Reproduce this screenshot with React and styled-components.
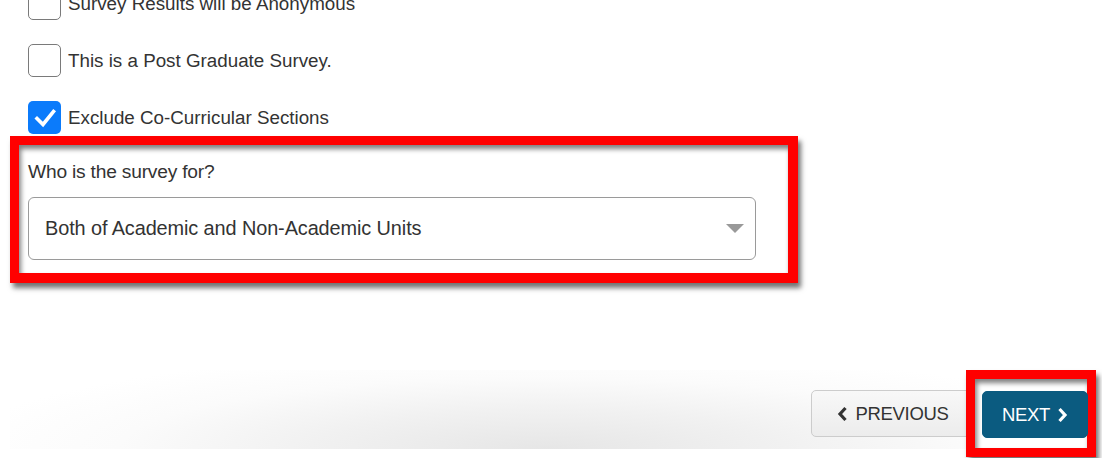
import React from 'react';
import styled, { createGlobalStyle } from 'styled-components';

const GlobalStyle = createGlobalStyle`
    html, body {
        margin: 0;
        padding: 0;
        background: #ffffff;
        overflow: hidden;
    }
    body {
        font-family: 'Liberation Sans', Arial, Helvetica, sans-serif;
        color: #333333;
    }
`

const options = [
    { label: 'Survey Results will be Anonymous', checked: false },
    { label: 'This is a Post Graduate Survey.', checked: false },
    { label: 'Exclude Co-Curricular Sections', checked: true },
]

const App = () => {
    return (
        <Wrapper>
            <GlobalStyle />

            <Options>
                {options.map((opt) => (
                    <Option key={opt.label}>
                        <Box checked={opt.checked}>
                            {opt.checked && (
                                <svg width="24" height="24" viewBox="0 0 24 24">
                                    <polyline points="4,12.5 10,18.5 20.5,5.5" fill="none" stroke="#fff" strokeWidth="3.6" strokeLinecap="square" />
                                </svg>
                            )}
                        </Box>
                        <span>{opt.label}</span>
                    </Option>
                ))}
            </Options>

            <Highlight>
                <Label>Who is the survey for?</Label>
                <Select>
                    <span>Both of Academic and Non-Academic Units</span>
                    <Caret />
                </Select>
            </Highlight>

            <Footer>
                <Button width="164px">
                    <svg width="11" height="16" viewBox="0 0 11 16">
                        <polyline points="8.5,2 3,8 8.5,14" fill="none" stroke="#333" strokeWidth="3.2" />
                    </svg>
                    PREVIOUS
                </Button>
                <NextHighlight>
                    <Button primary width="106px">
                        NEXT
                        <svg width="11" height="16" viewBox="0 0 11 16">
                            <polyline points="2.5,2 8,8 2.5,14" fill="none" stroke="#fff" strokeWidth="3.2" />
                        </svg>
                    </Button>
                </NextHighlight>
            </Footer>
        </Wrapper>
    );
}

export default App;


const Wrapper = styled.div`
    width: 1102px;
    height: 458px;
    overflow: hidden;
`

const Options = styled.div`
    display: flex;
    flex-direction: column;
    gap: 24px;
    margin-top: -13px;
    padding-left: 28px;
`

const Option = styled.label`
    display: flex;
    align-items: center;
    gap: 7px;
    font-size: 18.8px;
    color: #333;
    height: 33px;
`

const Box = styled.span`
    width: 33px;
    height: 33px;
    box-sizing: border-box;
    border-radius: 5px;
    display: flex;
    align-items: center;
    justify-content: center;
    border: ${p => p.checked ? 'none' : '1.5px solid #7a7a7a'};
    background: ${p => p.checked ? '#0b7bfb' : '#fff'};
`

const shadow = `3px 5px 5px rgba(0, 0, 0, 0.55), inset 2px 4px 5px rgba(0, 0, 0, 0.5)`

const Highlight = styled.div`
    margin: 2px 0 0 10px;
    width: 788px;
    box-sizing: border-box;
    border: 9px solid #ff0000;
    border-right-width: 10px;
    border-bottom-width: 10px;
    padding: 16px 32px 13px 9px;
    box-shadow: ${shadow};
    background: #fff;
`

const Label = styled.div`
    font-size: 19.2px;
    line-height: 22px;
    letter-spacing: -0.2px;
    color: #333;
`

const Select = styled.div`
    margin-top: 14px;
    height: 63px;
    box-sizing: border-box;
    border: 1px solid #9a9a9a;
    border-radius: 6px;
    display: flex;
    align-items: center;
    justify-content: space-between;
    padding: 0 11px 0 16px;
    font-size: 19.9px;
    letter-spacing: -0.1px;
    color: #333;
`

const Caret = styled.span`
    width: 0;
    height: 0;
    border-left: 9px solid transparent;
    border-right: 9px solid transparent;
    border-top: 9px solid #999;
`

const Footer = styled.div`
    margin-top: 87px;
    height: 87px;
    display: flex;
    align-items: center;
    justify-content: flex-end;
    padding-right: 6px;
    background: radial-gradient(ellipse 62% 125% at 56% 100%, #e6e6e6 0%, #f1f1f1 40%, #fbfbfb 72%, rgba(255,255,255,0) 100%) no-repeat;
    background-size: 960px 79px;
    background-position: 10px 0;
`

const Button = styled.button`
    width: ${p => p.width};
    flex-shrink: 0;
    height: 47px;
    box-sizing: border-box;
    display: inline-flex;
    align-items: center;
    justify-content: center;
    gap: 7px;
    padding: 0;
    border-radius: 5px;
    font-family: 'Liberation Sans', Arial, sans-serif;
    font-size: 18.5px;
    letter-spacing: -0.3px;
    cursor: pointer;
    border: 1px solid ${p => p.primary ? '#0a5a80' : '#cccccc'};
    color: ${p => p.primary ? '#fff' : '#333'};
    background: ${p => p.primary ? '#0b5b80' : 'linear-gradient(#f8f8f8, #ececec)'};
`

const NextHighlight = styled.div`
    width: 130px;
    height: 87px;
    flex-shrink: 0;
    box-sizing: border-box;
    margin-left: -9px;
    border: 9px solid #ff0000;
    display: flex;
    align-items: center;
    padding: 2px 0 0 7px;
    box-shadow: ${shadow};
    background: #fff;
    position: relative;
`
